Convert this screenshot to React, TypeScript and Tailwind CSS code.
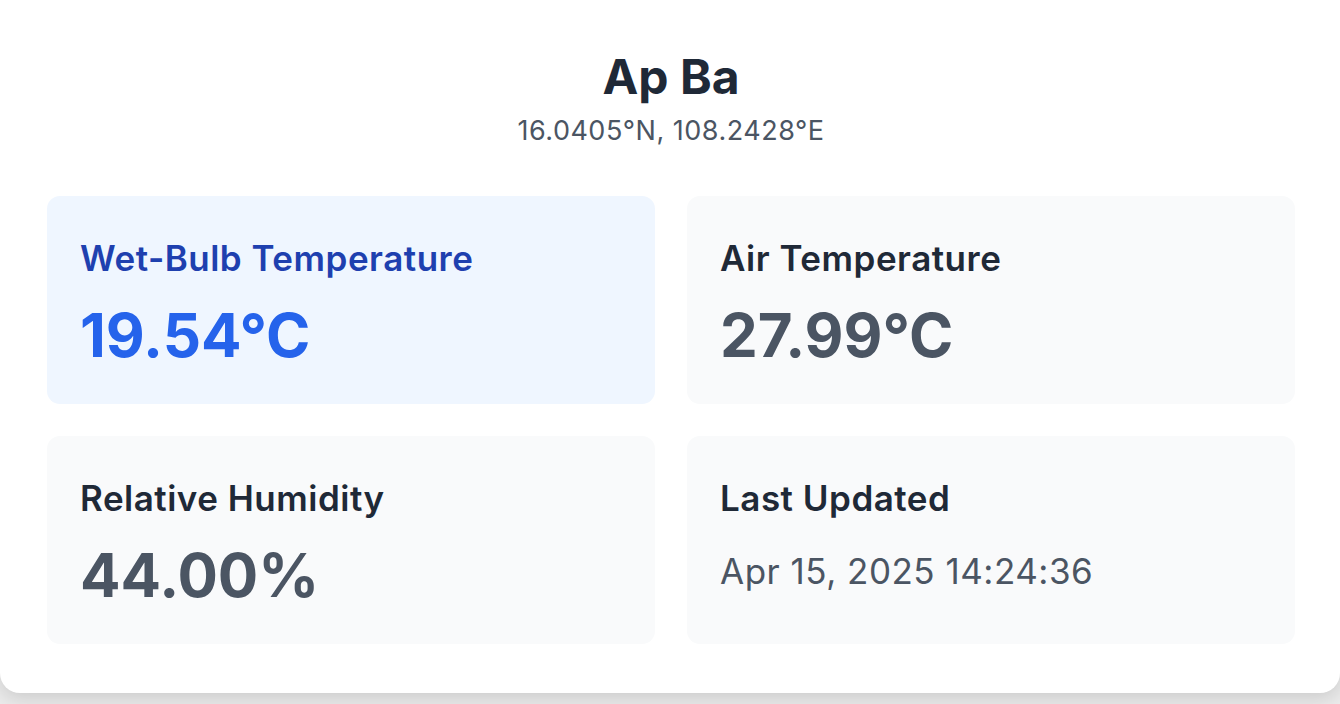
import React from "react";

type Stat = {
  label: string;
  value: string;
  highlight?: boolean;
  plain?: boolean;
};

const stats: Stat[] = [
  { label: "Wet-Bulb Temperature", value: "19.54°C", highlight: true },
  { label: "Air Temperature", value: "27.99°C" },
  { label: "Relative Humidity", value: "44.00%" },
  { label: "Last Updated", value: "Apr 15, 2025 14:24:36", plain: true },
];

const StatCard = ({ stat }: { stat: Stat }) => (
  <div
    className={`rounded-[13px] px-[33px] pt-[39px] pb-[35px] ${
      stat.highlight ? "bg-[#eff6ff]" : "bg-[#f9fafb]"
    }`}>
    <h3
      className={`text-[35px] leading-[47px] tracking-[0.5px] font-semibold mb-[20px] ${
        stat.highlight ? "text-[#1e40af]" : "text-[#1f2937]"
      }`}>
      {stat.label}
    </h3>
    {stat.plain ? (
      <p className="text-[35px] leading-[59px] pb-[8px] tracking-[0.5px] text-[#4b5563]">
        {stat.value}
      </p>
    ) : (
      <p
        className={`text-[60px] leading-[67px] font-bold ${
          stat.highlight ? "text-[#2563eb]" : "text-[#4b5563]"
        }`}>
        {stat.value}
      </p>
    )}
  </div>
);

export default function App() {
  return (
    <div
      className="min-h-[704px] bg-[#ebebeb]"
      style={{ fontFamily: "Inter, 'Noto Sans', sans-serif" }}>
      <div className="bg-white rounded-b-[20px] shadow-[0_6px_18px_rgba(0,0,0,0.13)] pl-[47px] pr-[45px] pt-[47px] pb-[49px]">
        <div className="text-center mb-[49px]">
          <h1 className="text-[48px] leading-[60px] font-bold text-[#1f2937] mb-[8px]">Ap Ba</h1>
          <p className="text-[27px] leading-[32px] tracking-[0.5px] text-[#4b5563]">
            16.0405°N, 108.2428°E
          </p>
        </div>
        <div className="grid grid-cols-2 gap-[32px]">
          {stats.map((s) => (
            <StatCard key={s.label} stat={s} />
          ))}
        </div>
      </div>
    </div>
  );
}
